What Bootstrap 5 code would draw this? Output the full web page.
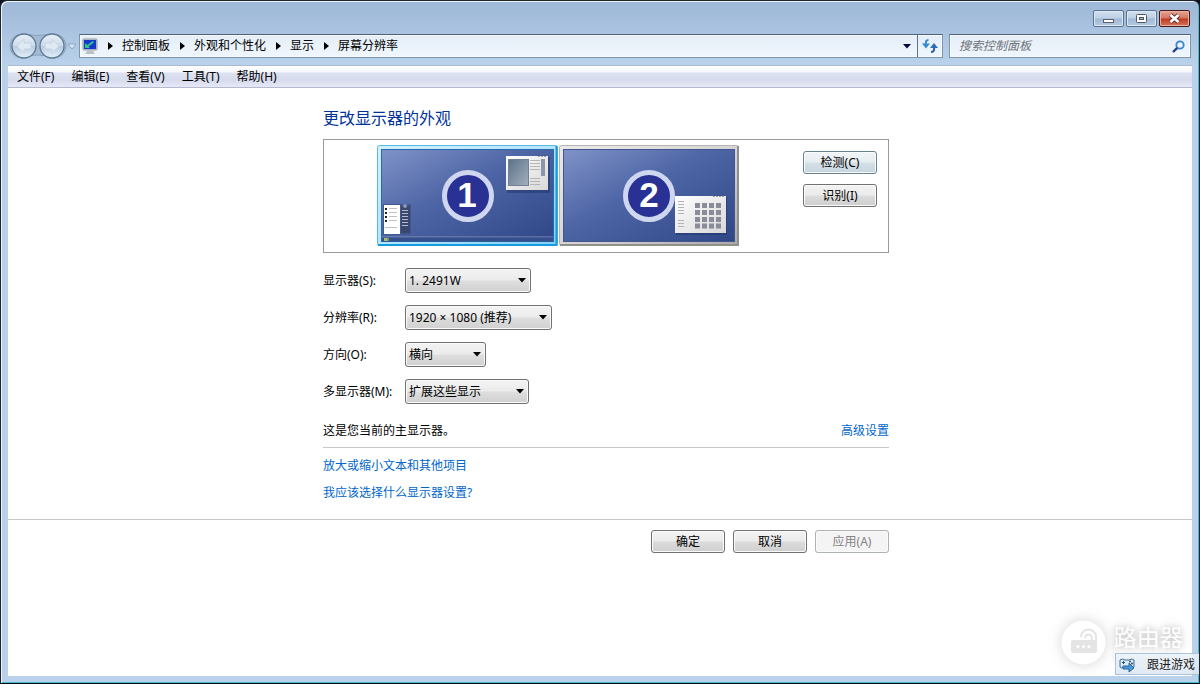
<!DOCTYPE html>
<html lang="zh-CN">
<head>
<meta charset="utf-8">
<meta name="viewport" content="width=device-width, initial-scale=1">
<title>屏幕分辨率</title>
<link href="https://cdn.jsdelivr.net/npm/bootstrap@5.3.0/dist/css/bootstrap.min.css" rel="stylesheet">
<style>
body{font-family:"Noto Sans","Noto Sans CJK SC",sans-serif;font-size:12px;line-height:18px;color:#000;background:#0b1420}
a{color:#0066cc;text-decoration:none}
.win{border:1px solid #20262e;border-bottom-color:#04090c;border-radius:7px 7px 0 0;padding:0 7px 7px;
  background:linear-gradient(#9db8d6 0,#a9c3e0 30px,#b9d1ea 62px,#b9d1ea 100%);
  box-shadow:inset 1px 1px 0 #edf4fb,inset -1px -1px 0 #45bccb}
/* title bar */
.caption-bar{height:33px;padding:9px 2px 0 0;gap:2px}
.cap{width:31px;height:17px;padding:0;border:1px solid #5c7390;border-radius:2px;
  background:linear-gradient(#d2dfee 0,#bdd0e6 48%,#9fb8d5 52%,#b7cce4);box-shadow:inset 0 0 0 1px #dce8f4;line-height:0}
.cap-close{border-color:#4a1717;background:linear-gradient(#e6a595 0,#d6755f 48%,#bd3a20 52%,#d4745a);box-shadow:inset 0 0 0 1px #e9b1a4}
/* navigation row */
.nav-row{height:31px;padding:0 1px 0 0}
.round-nav{width:71px;height:28px;overflow:visible}
.plain{border:0;background:none;padding:0;line-height:0}
.history{padding:0 6px}
.addr,.search{height:24px;border:1px solid #7e95ac;border-top-color:#4f6377;background:linear-gradient(#e4eef8,#f0f6fc);box-shadow:inset 0 0 0 1px #f6fafd}
.addr{padding-left:2px}
.addr a{color:#000}
.crumb-gap{width:24px;text-align:center;line-height:0}
.refresh{width:25px;border-left:1px solid #5f7388}
.search{width:242px;margin-left:6px;padding-left:9px;padding-right:5px}
.search input{border:0;background:none;outline:0;padding:0;width:100%;font-style:italic;color:#000}
.search input::placeholder{color:#6d7178;opacity:1}
/* menu */
.menu-bar{height:23px;padding:2px 9px 0;gap:17px;border-top:1px solid #a9bcd2;border-bottom:1px solid #b4b9cf;
  background:linear-gradient(#fff 0,#f5f7fc 6px,#dde2f1 7px,#d6dbed 14px,#e6e8f6)}
.menu-bar a{color:#000}
/* page */
.page-col{width:100%;max-width:578px;padding-left:12px}
.page-title{font-size:16px;line-height:22px;color:#003399;padding-top:19px;margin-bottom:10px}
.monitor-box{border:1px solid #9a9a9a;padding:5px 11px 5px 53px;height:114px}
.side{padding-top:6px;gap:10px}
.wbtn{width:74px;height:23px;padding:0;border:1px solid #707070;border-radius:3px;font-size:12px;line-height:18px;color:#000;
  background:linear-gradient(#f3f3f3 0,#ebebeb 48%,#dcdcdc 52%,#cfcfcf);box-shadow:inset 0 0 0 1px #fbfbfb}
.wbtn-focus{border-color:#68818f;background:linear-gradient(#f0f5f8 0,#e6edf1 48%,#d5e0e7 52%,#c6d5de)}
.wbtn:disabled{border-color:#adb2b5;color:#838383;background:#f4f4f4}
.settings{margin-top:15px;gap:12px}
.settings label{width:82px}
.wsel{height:25px;padding:0 22px 0 3px;border:1px solid #707070;border-radius:3px;font-size:12px;line-height:18px;color:#000;
  background:url("data:image/svg+xml,%3Csvg xmlns='http://www.w3.org/2000/svg' width='8' height='5'%3E%3Cpath d='M0 0h8L4 4.500z'/%3E%3C/svg%3E") no-repeat right 4px center/8px 5px,
  linear-gradient(#f3f3f3 0,#ebebeb 48%,#dedede 52%,#d0d0d0);box-shadow:inset 0 0 0 1px #fafafa}
.w-display{width:126px}.w-res{width:147px}.w-orient{width:81px}.w-multi{width:124px}
.status{margin-top:18px;padding-bottom:7px;border-bottom:1px solid #c8c8c8}
.help-links{padding:9px 0 17px;gap:9px}
.foot{border-top:1px solid #c8c8c8;padding-top:10px}
/* overlays at the corner */
.brand{position:absolute;right:16px;bottom:18px;gap:8px;color:#fff;z-index:1}
.brand svg{filter:drop-shadow(0 0 7px #d4d4d4)}
.brand-name{font-size:23px;line-height:30px;text-shadow:0 0 6px #bbb,0 0 12px #ddd}
.brand-site{font-size:12px;line-height:12px;color:#fff;text-shadow:0 0 4px #bbb}
.float-tip{position:absolute;right:0;bottom:8px;width:84px;height:22px;padding:1px 4px 0 3px;border:1px solid #a9c3d8;border-right:0;z-index:2;
  background:linear-gradient(#ecf3f9dd,#dbe6f0dd);color:#1b1b1b}
</style>
</head>
<body>
<div class="win min-vh-100 d-flex flex-column position-relative">
  <header>
    <div class="caption-bar d-flex justify-content-end">
      <button class="cap" type="button" aria-label="最小化"><svg width="29" height="15"><rect x="9.500" y="8.500" width="10" height="3" fill="#fff" stroke="#59616b"/></svg></button>
      <button class="cap" type="button" aria-label="最大化"><svg width="29" height="15"><rect x="9.500" y="3.500" width="10" height="8" rx="1" fill="#fff" stroke="#4d5661"/><rect x="12.500" y="6.500" width="4" height="2" fill="#a9bdd5" stroke="#4d5661"/></svg></button>
      <button class="cap cap-close" type="button" aria-label="关闭"><svg width="29" height="15"><path d="M10.500 4l8 7m0-7l-8 7" stroke="#5a3434" stroke-width="4.500"/><path d="M10.500 4l8 7m0-7l-8 7" stroke="#fff" stroke-width="2.600"/></svg></button>
    </div>
    <nav class="nav-row d-flex" aria-label="地址栏">
      <svg class="round-nav flex-shrink-0" viewBox="-1 1 71 28">
        <defs><linearGradient id="orb" x2="0" y2="1"><stop stop-color="#e9f0f7"/><stop offset=".48" stop-color="#cddceb"/><stop offset=".52" stop-color="#b8cde1"/><stop offset="1" stop-color="#e5f1fb"/></linearGradient></defs>
        <path d="M13 1q16 3 32 0a12 12 0 0 1 0 24q-16-6-32 0a12 12 0 0 1 0-24z" fill="#a3bad2" stroke="#8aa3bb"/>
        <circle cx="15" cy="13" r="12" fill="url(#orb)" stroke="#5f7a92" stroke-width="1.300"/>
        <circle cx="43" cy="13" r="12" fill="url(#orb)" stroke="#5f7a92" stroke-width="1.300"/>
        <path d="M8 13l7-7v4h7v6h-7v4z" fill="#dfe9f2" stroke="#c5d4e1"/>
        <path d="M50 13l-7-7v4h-7v6h7v4z" fill="#dfe9f2" stroke="#c5d4e1"/>
        <path d="M59 11h8l-4 5z" fill="#dce9f5" stroke="#8ba6c3"/>
      </svg>
      <div class="addr d-flex flex-grow-1 align-items-center">
        <svg class="flex-shrink-0" width="16" height="17"><rect x="1" y="1" width="14" height="11" rx="1" fill="#c5cdd4" stroke="#8d989f"/><rect x="2" y="2" width="12" height="9" fill="#1638c8"/><path d="M3 5v5h5L6.500 8.500 12 4.500 10.500 3 5.500 7z" fill="#32c48a"/><path d="M5 13h6l2 3H3z" fill="#b9c1c6"/></svg>
        <span class="crumb-gap"><svg width="5" height="8"><path d="M0 0v8l5-4z"/></svg></span><a href="#">控制面板</a>
        <span class="crumb-gap"><svg width="5" height="8"><path d="M0 0v8l5-4z"/></svg></span><a href="#">外观和个性化</a>
        <span class="crumb-gap"><svg width="5" height="8"><path d="M0 0v8l5-4z"/></svg></span><a href="#">显示</a>
        <span class="crumb-gap"><svg width="5" height="8"><path d="M0 0v8l5-4z"/></svg></span><a href="#">屏幕分辨率</a>
        <button class="plain history ms-auto" type="button" aria-label="历史记录"><svg width="8" height="5"><path d="M0 0h8L4 4.500z" fill="#000040"/></svg></button>
        <button class="plain refresh align-self-stretch" type="button" aria-label="刷新"><svg width="16" height="16"><path d="M6.500 2Q3 2 4 7" fill="none" stroke="#348bd2" stroke-width="2"/><path d="M0 5.500h8l-4 5z" fill="#348bd2"/><path d="M9 14q4 0 3-5" fill="none" stroke="#2459a4" stroke-width="2"/><path d="M8 10h8l-4-5z" fill="#2c6cb8"/></svg></button>
      </div>
      <div class="search d-flex align-items-center flex-shrink-0">
        <input type="text" placeholder="搜索控制面板" aria-label="搜索控制面板">
        <button class="plain" type="button" aria-label="搜索"><svg width="13" height="13"><circle cx="8" cy="5" r="3.700" fill="#e9f4fd" stroke="#3a83c6" stroke-width="1.800"/><path d="M5.300 7.800L1 12" stroke="#243f86" stroke-width="2.400"/></svg></button>
      </div>
    </nav>
    <nav class="menu-bar d-flex" aria-label="菜单">
      <a href="#">文件(F)</a><a href="#">编辑(E)</a><a href="#">查看(V)</a><a href="#">工具(T)</a><a href="#">帮助(H)</a>
    </nav>
  </header>

  <main class="bg-white flex-grow-1">
    <div class="page-col mx-auto">
      <h1 class="page-title fw-normal">更改显示器的外观</h1>
      <div class="monitor-box d-flex justify-content-between">
        <div class="d-flex">
          <svg width="181" height="102" role="img" aria-label="显示器 1">
            <defs>
              <linearGradient id="desk" x2="1" y2="1"><stop stop-color="#7f93c8"/><stop offset=".45" stop-color="#4d64a5"/><stop offset="1" stop-color="#2f4787"/></linearGradient>
              <linearGradient id="edge" x2="1" y2="1"><stop stop-color="#d2f0fe"/><stop offset=".5" stop-color="#b4e5fd"/><stop offset="1" stop-color="#7fd0f8"/></linearGradient>
              <linearGradient id="grey" x2="1" y2="1"><stop stop-color="#ebeae8"/><stop offset=".6" stop-color="#d2d1cf"/><stop offset="1" stop-color="#a9a8a6"/></linearGradient>
              <linearGradient id="pane" x2="1" y2="1"><stop stop-color="#5b7288"/><stop offset="1" stop-color="#a3b0bd"/></linearGradient>
              <linearGradient id="paper" x2="1" y2="1"><stop stop-color="#fff"/><stop offset="1" stop-color="#d8d8d8"/></linearGradient>
            </defs>
            <rect x=".5" y=".5" width="180" height="100" rx="2" fill="url(#edge)" stroke="#58b9e8"/>
            <path d="M1 100h178.500V1" fill="none" stroke="#179bdf" stroke-width="2"/>
            <rect x="4.500" y="4.500" width="172" height="92" fill="url(#desk)" stroke="#256bad"/>
            <path d="M5 92h171" stroke="#8392bd"/><path d="M5 94.500h171" stroke="#354f8c" stroke-width="4"/>
            <rect x="7" y="93" width="3" height="3" fill="#b8b46b"/><rect x="10" y="93" width="2" height="3" fill="#5ea782"/>
            <rect x="6" y="59" width="28" height="31" fill="#42588f"/><rect x="7" y="60" width="16" height="29" fill="#fff"/>
            <path d="M8 64h2m-2 4h2m-2 4h2m-2 4h2" stroke="#222" stroke-width="2"/>
            <path d="M12 63.500h8m-8 4h8m-8 4h8m-8 4h8M8 82.500h12" stroke="#c0c0c0"/>
            <rect x="24" y="61" width="9" height="27" fill="#3a4870"/><circle cx="28" cy="61" r="2" fill="#8995b9"/>
            <path d="M25 65.500h6m-6 3h6m-6 3h6m-6 3h6m-6 3h6m-6 3h6" stroke="#b5bac8"/>
            <rect x="130" y="12" width="43" height="36" fill="#263b70" opacity=".6"/><rect x="129" y="11" width="42" height="34" fill="url(#paper)"/>
            <path d="M161 11h9" stroke="#40517c" stroke-dasharray="2 1"/>
            <rect x="131.500" y="14.500" width="20" height="26" fill="url(#pane)" stroke="#6f8192"/><path d="M153 15.500h10m-10 3h10m-10 3h10m-10 3h10m-10 9h10m-10 3h10m-10 3h10" stroke="#b5b5b5"/>
            <rect x="164" y="14" width="4" height="17" fill="#8996ac"/>
            <circle cx="91" cy="51" r="23.500" fill="#293194" stroke="#cfd6ef" stroke-width="5"/>
            <text x="90" y="62" text-anchor="middle" fill="#fff" font-family="Liberation Sans,sans-serif" font-weight="700" font-size="35">1</text>
          </svg>
          <svg width="181" height="102" role="img" aria-label="显示器 2">
            <rect x="1.500" y=".5" width="179" height="100" rx="2" fill="url(#grey)" stroke="#b5b4b2"/>
            <path d="M2 100h178V1" fill="none" stroke="#918f8c" stroke-width="2"/>
            <rect x="5.500" y="4.500" width="171" height="92" fill="url(#desk)" stroke="#40578f"/>
            <circle cx="91" cy="51" r="23.500" fill="#293194" stroke="#cfd6ef" stroke-width="5"/>
            <text x="91" y="62" text-anchor="middle" fill="#fff" font-family="Liberation Sans,sans-serif" font-weight="700" font-size="35">2</text>
            <rect x="118" y="52" width="51" height="38" fill="#24396e" opacity=".6"/><rect x="117" y="51" width="51" height="37" fill="url(#paper)"/>
            <path d="M155 51h12" stroke="#40517c" stroke-dasharray="2 1"/>
            <path d="M120 56.500h6m-6 3h6m-6 3h6m-6 3h6m-6 3h6m-6 7h6m-6 3h6m-6 3h6" stroke="#b3b3b3"/>
            <path d="M137 60.500h26m-26 7h26m-26 7h26m-26 6.500h26" stroke="#8a8c99" stroke-width="5" stroke-dasharray="5 2"/>
          </svg>
        </div>
        <div class="side d-flex flex-column">
          <button class="wbtn wbtn-focus" type="button">检测(C)</button>
          <button class="wbtn" type="button">识别(I)</button>
        </div>
      </div>
      <form class="settings d-flex flex-column">
        <div class="d-flex align-items-center"><label for="display">显示器(S):</label><select id="display" class="form-select wsel w-display"><option>1. 2491W</option></select></div>
        <div class="d-flex align-items-center"><label for="res">分辨率(R):</label><select id="res" class="form-select wsel w-res"><option>1920 × 1080 (推荐)</option></select></div>
        <div class="d-flex align-items-center"><label for="orient">方向(O):</label><select id="orient" class="form-select wsel w-orient"><option>横向</option></select></div>
        <div class="d-flex align-items-center"><label for="multi">多显示器(M):</label><select id="multi" class="form-select wsel w-multi"><option>扩展这些显示</option></select></div>
      </form>
      <div class="status d-flex justify-content-between"><span>这是您当前的主显示器。</span><a href="#">高级设置</a></div>
      <div class="help-links d-flex flex-column align-items-start"><a href="#">放大或缩小文本和其他项目</a><a href="#">我应该选择什么显示器设置?</a></div>
    </div>
    <div class="foot">
      <div class="page-col mx-auto d-flex justify-content-end gap-2">
        <button class="wbtn" type="button">确定</button>
        <button class="wbtn" type="button">取消</button>
        <button class="wbtn" type="button" disabled>应用(A)</button>
      </div>
    </div>
  </main>

  <div class="brand d-flex align-items-center">
    <svg width="45" height="45"><circle cx="22.500" cy="22.500" r="22" fill="#fff"/><rect x="10" y="20" width="26" height="13" rx="2" fill="#e4e4e4"/><path d="M20 17a7.500 7.500 0 0 1 15 0v4M24 18a3.500 3.500 0 0 1 7 0v3" fill="none" stroke="#e4e4e4" stroke-width="2"/><g fill="#fff"><circle cx="17" cy="26.500" r="1.500"/><circle cx="22.500" cy="26.500" r="1.500"/><circle cx="28" cy="26.500" r="1.500"/></g></svg>
    <div><div class="brand-name">路由器</div><div class="brand-site">luyouqi.com</div></div>
  </div>
  <div class="float-tip d-flex align-items-center justify-content-between">
    <svg width="16" height="16"><path d="M1 3q3-2 5 0h4q3-2 5 0v7q-4 2-5 0H5q-3 2-4 0z" fill="#dbeaf6" stroke="#416b91"/><path d="M3 5.500h3M4.500 4v3" stroke="#274c73"/><circle cx="11" cy="4.500" r="1" fill="#274c73"/><circle cx="13" cy="6.500" r="1" fill="#274c73"/><path d="M4 9h6V6l5 5-5 4v-3H4z" fill="#4b98d8" stroke="#2c6599"/></svg>
    <span>跟进游戏</span>
  </div>
</div>
<script src="https://cdn.jsdelivr.net/npm/bootstrap@5.3.0/dist/js/bootstrap.bundle.min.js"></script>
</body>
</html>
